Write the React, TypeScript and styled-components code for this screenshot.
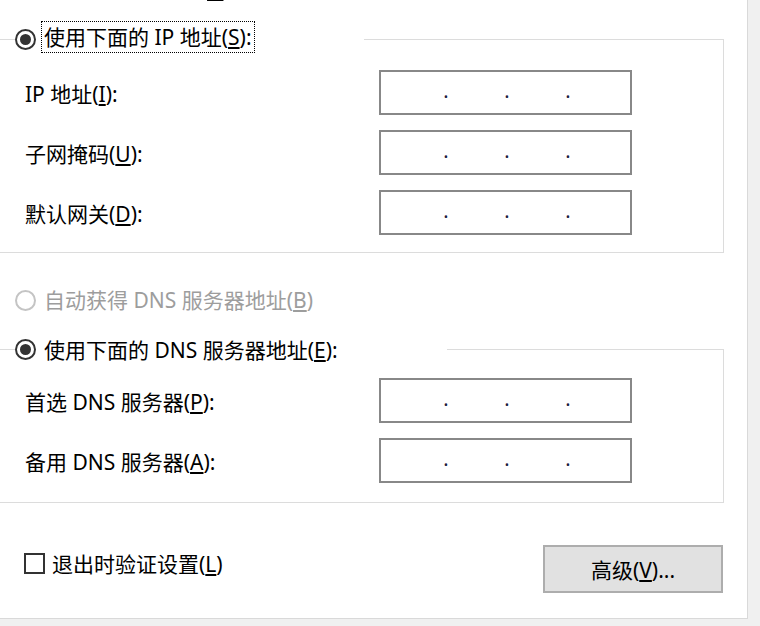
import { FC, ReactNode } from 'react';
import styled, { createGlobalStyle } from 'styled-components';

const GlobalStyle = createGlobalStyle`
  html, body {
    margin: 0;
    padding: 0;
    background: #f0f0f0;
  }

  body {
    font-family: "Noto Sans", "Noto Sans CJK SC", sans-serif;
  }
`;

const Page = styled.div`
  width: 760px;
  height: 626px;
  overflow: hidden;
  background: #f0f0f0;
`;

const Panel = styled.div`
  box-sizing: border-box;
  width: 748px;
  height: 619px;

  display: flex;
  flex-direction: column;

  background: #fff;
  border-right: 1px solid #d9d9d9;
  border-bottom: 1px solid #d9d9d9;

  font-size: 21px;
  color: #000;
`;

interface RadioProps {
  $checked?: boolean;
  $disabled?: boolean;
}

const RadioCircle = styled.span<RadioProps>`
  box-sizing: border-box;
  flex: none;
  width: 21px;
  height: 21px;

  display: flex;
  align-items: center;
  justify-content: center;

  border-radius: 50%;
  border: 2px solid ${({ $disabled }) => ($disabled ? '#c4c4c4' : '#333')};
  background: #fff;

  &::after {
    content: '';
    display: ${({ $checked }) => ($checked ? 'block' : 'none')};
    width: 11px;
    height: 11px;
    border-radius: 50%;
    background: #333;
  }
`;

interface LabelProps {
  $focused?: boolean;
  $disabled?: boolean;
}

const RadioLabel = styled.span<LabelProps>`
  height: 30px;
  line-height: 30px;
  padding: 0 2px;
  margin-bottom: ${({ $focused }) => ($focused ? '5px' : '0')};

  white-space: nowrap;
  color: ${({ $disabled }) => ($disabled ? '#9d9d9d' : '#000')};
  outline: ${({ $focused }) => ($focused ? '1px dotted #000' : 'none')};

  u {
    text-underline-offset: 2px;
  }
`;

const OptionRow = styled.div<{ $mt: number }>`
  height: 32px;
  margin-top: ${({ $mt }) => $mt}px;
  padding-left: 15px;

  display: flex;
  align-items: center;
  gap: 6px;
`;

// group box: its left edge lies just outside the visible panel
const Group = styled.section<{ $mt: number; $pb: number }>`
  box-sizing: border-box;
  width: 734px;
  margin: ${({ $mt }) => $mt}px 0 0 -10px;
  padding-bottom: ${({ $pb }) => $pb}px;

  display: flex;
  flex-direction: column;
  gap: 15px;

  border: 1px solid #dcdcdc;
`;

// the radio header sits on the group's top border and hides that part of it
const GroupHeader = styled.div<{ $width: number; $mb: number }>`
  box-sizing: border-box;
  width: ${({ $width }) => $width}px;
  height: 37px;
  margin: -19px 0 ${({ $mb }) => $mb}px 24px;

  display: flex;
  align-items: center;
  gap: 6px;

  background: #fff;
`;

const FieldRow = styled.div`
  display: grid;
  grid-template-columns: 354px 253px;
  align-items: center;
  padding-left: 34px;
`;

const FieldLabel = styled.span`
  white-space: nowrap;

  u {
    text-underline-offset: 2px;
  }
`;

const IpBox = styled.div`
  box-sizing: border-box;
  width: 253px;
  height: 45px;
  padding-left: 62px;

  display: flex;
  align-items: center;
  gap: 55px;

  background: #fff;
  border: 2px solid #888;
`;

const IpDot = styled.span`
  width: 6px;
  margin-top: -3px;
  line-height: 20px;
  font-size: 20px;
  text-align: center;
  color: #1b1b3b;
`;

const Footer = styled.div`
  margin-top: 42px;
  padding: 0 24px;

  display: flex;
  justify-content: space-between;
  align-items: flex-start;
`;

const CheckRow = styled.label`
  margin-top: 3px;

  display: flex;
  align-items: center;
  gap: 7px;
`;

const CheckText = styled.span`
  white-space: nowrap;

  u {
    text-underline-offset: 2px;
  }
`;

const CheckBox = styled.span`
  box-sizing: border-box;
  flex: none;
  width: 21px;
  height: 21px;
  border: 2px solid #333;
  background: #fff;
`;

const Button = styled.button`
  box-sizing: border-box;
  width: 180px;
  height: 48px;
  padding: 0;

  background: #e1e1e1;
  border: 2px solid #adadad;

  font: inherit;
  font-size: 21px;
  color: #000;

  u {
    text-underline-offset: 2px;
  }
`;

const IpField: FC = () => (
  <IpBox>
    <IpDot>.</IpDot>
    <IpDot>.</IpDot>
    <IpDot>.</IpDot>
  </IpBox>
);

type Field = { text: string; key: string; after?: string };

const ipFields: Field[] = [
  { text: 'IP 地址(', key: 'I', after: '):' },
  { text: '子网掩码(', key: 'U', after: '):' },
  { text: '默认网关(', key: 'D', after: '):' },
];

const dnsFields: Field[] = [
  { text: '首选 DNS 服务器(', key: 'P', after: '):' },
  { text: '备用 DNS 服务器(', key: 'A', after: '):' },
];

const Fields: FC<{ items: Field[] }> = ({ items }) => (
  <>
    {items.map(({ text, key, after }) => (
      <FieldRow key={key}>
        <FieldLabel>
          {text}
          <u>{key}</u>
          {after}
        </FieldLabel>
        <IpField />
      </FieldRow>
    ))}
  </>
);

const AccessText: FC<{ pre: string; k: string; post: string }> = ({ pre, k, post }) => (
  <>
    {pre}
    <u>{k}</u>
    {post}
  </>
);

const Option: FC<{
  mt: number;
  checked?: boolean;
  disabled?: boolean;
  children: ReactNode;
}> = ({ mt, checked, disabled, children }) => (
  <OptionRow $mt={mt}>
    <RadioCircle $checked={checked} $disabled={disabled} />
    <RadioLabel $disabled={disabled}>{children}</RadioLabel>
  </OptionRow>
);

export default function App() {
  return (
    <Page>
      <GlobalStyle />
      <Panel>
        <Option mt={-27}>
          <AccessText pre="自动获得 IP 地址(" k="O" post=")" />
        </Option>

        <Group $mt={34} $pb={17}>
          <GroupHeader $width={349} $mb={-3}>
            <RadioCircle $checked />
            <RadioLabel $focused>
              <AccessText pre="使用下面的 IP 地址(" k="S" post="):" />
            </RadioLabel>
          </GroupHeader>
          <Fields items={ipFields} />
        </Group>

        <Option mt={31} disabled>
          <AccessText pre="自动获得 DNS 服务器地址(" k="B" post=")" />
        </Option>

        <Group $mt={33} $pb={19}>
          <GroupHeader $width={432} $mb={-5}>
            <RadioCircle $checked />
            <RadioLabel>
              <AccessText pre="使用下面的 DNS 服务器地址(" k="E" post="):" />
            </RadioLabel>
          </GroupHeader>
          <Fields items={dnsFields} />
        </Group>

        <Footer>
          <CheckRow>
            <CheckBox />
            <CheckText>
              <AccessText pre="退出时验证设置(" k="L" post=")" />
            </CheckText>
          </CheckRow>
          <Button>
            <AccessText pre="高级(" k="V" post=")..." />
          </Button>
        </Footer>
      </Panel>
    </Page>
  );
}
